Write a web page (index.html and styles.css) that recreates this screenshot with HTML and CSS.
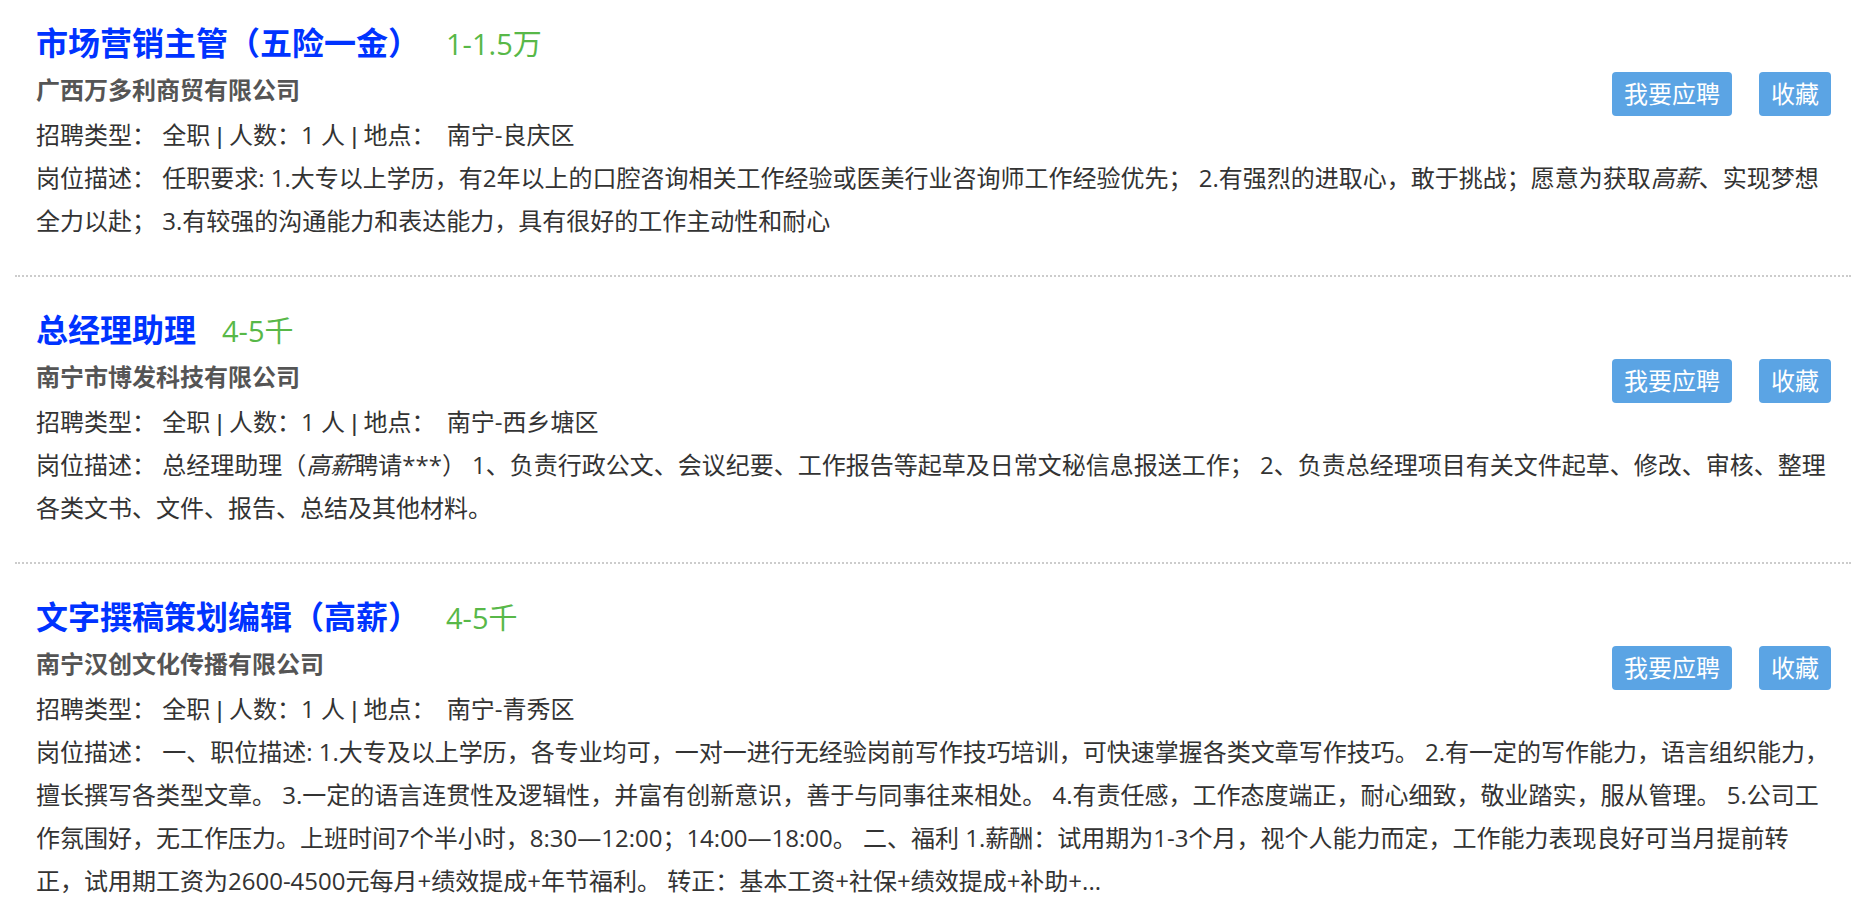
FILE: index.html
```html
<!DOCTYPE html>
<html lang="zh-CN">
<head>
<meta charset="utf-8">
<title>职位列表</title>
<link rel="stylesheet" href="styles.css">
</head>
<body>
<ul class="job-list">
  <li class="job">
    <div class="job-head">
      <a class="job-title" href="#">市场营销主管（五险一金）</a>
      <span class="job-salary">1-1.5万</span>
    </div>
    <div class="job-company-row">
      <div class="job-company">广西万多利商贸有限公司</div>
      <div class="job-actions">
        <button class="btn" type="button">我要应聘</button>
        <button class="btn" type="button">收藏</button>
      </div>
    </div>
    <p class="job-meta">招聘类型： 全职 <span class="sep">|</span> 人数：1 人 <span class="sep">|</span> 地点： <span class="place">南宁-良庆区</span></p>
    <p class="job-desc">岗位描述： 任职要求: 1.大专以上学历，有2年以上的口腔咨询相关工作经验或医美行业咨询师工作经验优先； 2.有强烈的进取心，敢于挑战；愿意为获取<em>高薪</em>、实现梦想全力以赴； 3.有较强的沟通能力和表达能力，具有很好的工作主动性和耐心</p>
  </li>
  <li class="job">
    <div class="job-head">
      <a class="job-title" href="#">总经理助理</a>
      <span class="job-salary">4-5千</span>
    </div>
    <div class="job-company-row">
      <div class="job-company">南宁市博发科技有限公司</div>
      <div class="job-actions">
        <button class="btn" type="button">我要应聘</button>
        <button class="btn" type="button">收藏</button>
      </div>
    </div>
    <p class="job-meta">招聘类型： 全职 <span class="sep">|</span> 人数：1 人 <span class="sep">|</span> 地点： <span class="place">南宁-西乡塘区</span></p>
    <p class="job-desc">岗位描述： 总经理助理（<em>高薪</em>聘请***） 1、负责行政公文、会议纪要、工作报告等起草及日常文秘信息报送工作； 2、负责总经理项目有关文件起草、修改、审核、整理各类文书、文件、报告、总结及其他材料。</p>
  </li>
  <li class="job">
    <div class="job-head">
      <a class="job-title" href="#">文字撰稿策划编辑（高薪）</a>
      <span class="job-salary">4-5千</span>
    </div>
    <div class="job-company-row">
      <div class="job-company">南宁汉创文化传播有限公司</div>
      <div class="job-actions">
        <button class="btn" type="button">我要应聘</button>
        <button class="btn" type="button">收藏</button>
      </div>
    </div>
    <p class="job-meta">招聘类型： 全职 <span class="sep">|</span> 人数：1 人 <span class="sep">|</span> 地点： <span class="place">南宁-青秀区</span></p>
    <p class="job-desc">岗位描述： 一、职位描述: 1.大专及以上学历，各专业均可，一对一进行无经验岗前写作技巧培训，可快速掌握各类文章写作技巧。 2.有一定的写作能力，语言组织能力，擅长撰写各类型文章。 3.一定的语言连贯性及逻辑性，并富有创新意识，善于与同事往来相处。 4.有责任感，工作态度端正，耐心细致，敬业踏实，服从管理。 5.公司工作氛围好，无工作压力。上班时间7个半小时，8:30—12:00；14:00—18:00。 二、福利 1.薪酬：试用期为1-3个月，视个人能力而定，工作能力表现良好可当月提前转正，试用期工资为2600-4500元每月+绩效提成+年节福利。 转正：基本工资+社保+绩效提成+补助+...</p>
  </li>
</ul>
</body>
</html>
```

FILE: styles.css
```css
html, body {
  margin: 0;
  padding: 0;
  background: #fff;
}

body {
  font-family: "Open Sans", "Noto Sans CJK SC", sans-serif;
  color: #333;
  font-size: 24px;
}

.job-list {
  list-style: none;
  margin: 0 7px 0 15px;
  padding: 0;
}

.job {
  padding: 28px 20px 33px 21px;
  border-top: 2px dotted #ccc;
}

.job:first-child {
  border-top: 0;
  padding-top: 18px;
}

.job-head {
  display: flex;
  align-items: baseline;
  height: 50px;
  line-height: 50px;
}

.job-title {
  font-size: 32px;
  font-weight: bold;
  color: #0033ff;
  text-decoration: none;
}

.job-salary {
  margin-left: 26px;
  font-size: 29px;
  color: #58b848;
}

.job-company-row {
  display: flex;
  justify-content: space-between;
  align-items: flex-start;
  margin-bottom: 2px;
}

.job-company {
  font-weight: bold;
  color: #555;
  line-height: 44px;
}

.job-actions {
  display: flex;
  gap: 27px;
  margin-top: 4px;
  margin-bottom: -4px;
}

.btn {
  height: 44px;
  padding: 0 12px;
  border: 0;
  border-radius: 4px;
  background: #5ba4e4;
  color: #fff;
  font-family: inherit;
  font-size: 24px;
  line-height: 44px;
  cursor: pointer;
}

.job-meta {
  margin: 0;
  line-height: 41px;
}

.job-meta .sep {
  font-family: "Liberation Sans", sans-serif;
}

.job-meta .place {
  margin-left: 5px;
}

.job-desc {
  margin: 0;
  line-height: 43px;
}

.job-desc em {
  font-style: italic;
}
```
